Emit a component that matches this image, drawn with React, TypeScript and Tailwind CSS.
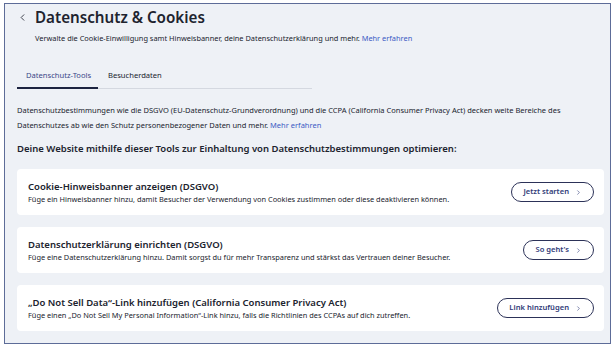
import { ChevronLeft, ChevronRight } from "lucide-react";

const tools = [
  {
    title: "Cookie-Hinweisbanner anzeigen (DSGVO)",
    text: "Füge ein Hinweisbanner hinzu, damit Besucher der Verwendung von Cookies zustimmen oder diese deaktivieren können.",
    action: "Jetzt starten",
  },
  {
    title: "Datenschutzerklärung einrichten (DSGVO)",
    text: "Füge eine Datenschutzerklärung hinzu. Damit sorgst du für mehr Transparenz und stärkst das Vertrauen deiner Besucher.",
    action: "So geht's",
  },
  {
    title: "„Do Not Sell Data“-Link hinzufügen (California Consumer Privacy Act)",
    text: "Füge einen „Do Not Sell My Personal Information“-Link hinzu, falls die Richtlinien des CCPAs auf dich zutreffen.",
    action: "Link hinzufügen",
  },
];

export default function App() {
  return (
    <div className="w-[616px] h-[351px] bg-white pt-[3px] pl-[4px] font-['Noto_Sans',sans-serif] text-[#20232e]">
      <div className="w-[607px] h-[341px] border border-[#5d6c98] bg-[#eef1f6] flex flex-col">
        {/* Header */}
        <div className="flex items-center pt-[3px] pl-[12px]">
          <ChevronLeft size={11} strokeWidth={2} className="text-[#30343f]" />
          <h1 className="ml-[7px] text-[15.2px] leading-[20px] font-semibold">Datenschutz &amp; Cookies</h1>
        </div>
        <p className="pl-[30px] mt-[5px] text-[7.4px] leading-[12px]">
          Verwalte die Cookie-Einwilligung samt Hinweisbanner, deine Datenschutzerklärung und mehr.{" "}
          <span className="text-[#3b5bc4]">Mehr erfahren</span>
        </p>

        {/* Tabs */}
        <div className="ml-[12px] mt-[25px] w-[295px] flex border-b border-[#d4d8e0] text-[7.6px] leading-[12px]">
          <div className="w-[81px] pl-[9px] pb-[6px] border-b-2 border-[#1c2340] -mb-px text-[#3a4788]">Datenschutz-Tools</div>
          <div className="ml-[10px] pb-[6px]">Besucherdaten</div>
        </div>

        <p className="px-[12px] mt-[14px] text-[7.5px] leading-[15px]">
          Datenschutzbestimmungen wie die DSGVO (EU-Datenschutz-Grundverordnung) und die CCPA (California Consumer Privacy Act) decken weite Bereiche des Datenschutzes ab wie den Schutz personenbezogener Daten und mehr.{" "}
          <span className="text-[#3b5bc4]">Mehr erfahren</span>
        </p>

        <h2 className="px-[12px] mt-[9px] text-[9.5px] leading-[14px] font-semibold">
          Deine Website mithilfe dieser Tools zur Einhaltung von Datenschutzbestimmungen optimieren:
        </h2>

        <div className="flex flex-col gap-[12px] mt-[13px] pl-[12px] pr-[6px]">
          {tools.map((t) => (
            <div key={t.action} className="h-[46px] bg-white rounded-[4px] flex items-center pl-[11px] pr-[10px]">
              <div className="flex-1 flex flex-col">
                <div className="text-[9.5px] leading-[14px] font-semibold">{t.title}</div>
                <div className="text-[7.4px] leading-[11px]">{t.text}</div>
              </div>
              <button className="h-[20px] px-[11px] rounded-full border border-[#2c3258] text-[7.6px] font-semibold text-[#2f3a78] flex items-center gap-[6px]">
                {t.action}
                <ChevronRight size={7} strokeWidth={2} />
              </button>
            </div>
          ))}
        </div>
      </div>
    </div>
  );
}
